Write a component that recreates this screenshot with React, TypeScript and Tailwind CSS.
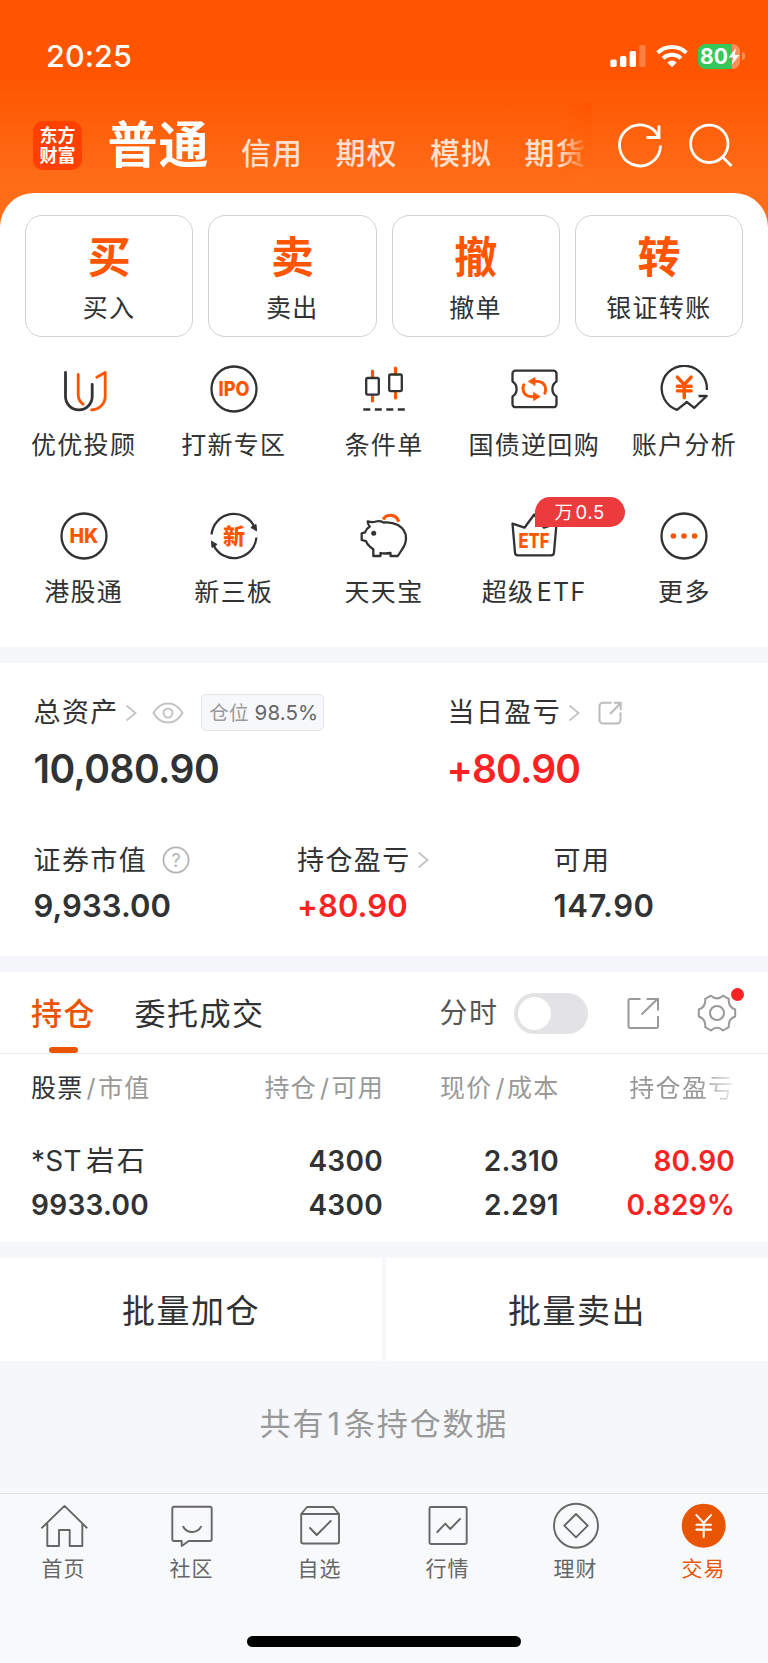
import type { ReactNode } from 'react';
import { JapaneseYen } from 'lucide-react';

const DARK = '#303233';
const ORANGE = '#ff5500';

const accountTabs = ['信用', '期权', '模拟', '期货'];

const quickActions = [
  { mark: '买', label: '买入' },
  { mark: '卖', label: '卖出' },
  { mark: '撤', label: '撤单' },
  { mark: '转', label: '银证转账' },
];

function Icon({ children }: { children: ReactNode }) {
  return (
    <svg className="w-12 h-12 shrink-0" viewBox="0 0 48 48" fill="none" stroke={DARK} strokeWidth={2.3} strokeLinecap="round" strokeLinejoin="round">
      {children}
    </svg>
  );
}

function IconText({ children, y = 31, size = 20, width }: { children: string; y?: number; size?: number; width?: number }) {
  return (
    <text x="24" y={y} fontSize={size} fontWeight={800} textAnchor="middle" fill={ORANGE} stroke="none" textLength={width} lengthAdjust="spacingAndGlyphs">
      {children}
    </text>
  );
}

const services: { label: string; badge?: string; icon: ReactNode }[] = [
  {
    label: '优优投顾',
    icon: (
      <Icon>
        <g strokeWidth={2.8}>
          <path d="M5.5 7.5V31.5a13.3 13.3 0 0 0 26.7 0V19.5" />
          <path stroke={ORANGE} d="M18.2 9.5V29q0 7 5 10.3M36.8 12.3l8.4-4.8V31a13.5 13.5 0 0 1-13.7 13.8" />
        </g>
      </Icon>
    ),
  },
  {
    label: '打新专区',
    icon: (
      <Icon>
        <circle cx="24" cy="24" r="22.5" />
        <IconText width={31}>IPO</IconText>
      </Icon>
    ),
  },
  {
    label: '条件单',
    icon: (
      <Icon>
        <path stroke={ORANGE} strokeWidth={3.2} d="M12.5 6v6M12.5 31v5M35.5 3v6M35.5 27v6" />
        <rect x="6.2" y="13" width="12.6" height="16.6" rx="1.5" />
        <rect x="29.2" y="9.5" width="12.6" height="16.6" rx="1.5" />
        <path strokeLinecap="butt" strokeDasharray="7 4.5" d="M3.3 44.5H44.8" />
      </Icon>
    ),
  },
  {
    label: '国债逆回购',
    icon: (
      <Icon>
        <path d="M5.5 5.6H43.5a3 3 0 0 1 3 3V16.5c-5.5 3.5-5.5 11.5 0 15V39.2a3 3 0 0 1-3 3H5.5a3 3 0 0 1-3-3V31.5c5.5-3.5 5.5-11.5 0-15V8.6a3 3 0 0 1 3-3Z" />
        {[0, 180].map((r) => (
          <g key={r} transform={`rotate(${r} 24.3 24)`} stroke={ORANGE}>
            <path strokeWidth={2.9} d="M25 16.4H28Q35.6 17.5 35.6 24.5Q35.6 26.8 34.8 28.2" />
            <path strokeWidth={0.8} fill={ORANGE} d="M18.6 16.3l6.4-3.9v7.8z" />
          </g>
        ))}
      </Icon>
    ),
  },
  {
    label: '账户分析',
    icon: (
      <Icon>
        <path strokeLinecap="butt" d="M46.8 25A22.6 22.6 0 1 0 17 44.8l9.8-7.8 7.4 5.8 12.5-11.8H38.5" />
        <JapaneseYen x={10.5} y={8.7} width={27.5} height={27.5} color={ORANGE} strokeWidth={3} />
      </Icon>
    ),
  },
  {
    label: '港股通',
    icon: (
      <Icon>
        <circle cx="24" cy="24" r="22.5" />
        <IconText width={29}>HK</IconText>
      </Icon>
    ),
  },
  {
    label: '新三板',
    icon: (
      <Icon>
        {[0, 180].map((r) => (
          <g key={r} transform={`rotate(${r} 24 24)`}>
            <path strokeLinecap="butt" d="M1.6 22.5A22.5 22.5 0 0 1 44.5 15" />
            <path fill={DARK} strokeWidth={1} d="M41.2 15.3l4.8-2.8.5 6z" />
          </g>
        ))}
        <IconText size={22} y={32}>新</IconText>
      </Icon>
    ),
  },
  {
    label: '天天宝',
    icon: (
      <Icon>
        <path d="M7.7 9.3Q12 11 16 9.5Q20 8.5 23.5 10.5Q31 9.5 38 13Q46 18 46 26Q46 32 42 37.5L37.8 44H30.5V41Q25 42 20.5 41V44H13.3V37.3Q7.5 33.5 6 29.2L1.7 28V21.3L5 20.3Q6.5 16.5 9.8 14.5Q7.5 12 7.7 9.3Z" />
        <circle cx="13.7" cy="21.3" r="2.5" fill={DARK} stroke="none" />
        <path stroke={ORANGE} strokeWidth={3.2} strokeLinecap="butt" d="M23.2 7.5C26.5 1.5 36.5 1.5 38.8 9.8" />
      </Icon>
    ),
  },
  {
    label: '超级 ETF',
    badge: '万 0.5',
    icon: (
      <Icon>
        <path d="M2.5 11.7L14.5 15.7L24.2 2.5L34 15.7L46.5 11.7L44 40.5a3 3 0 0 1-3 2.9H8a3 3 0 0 1-3-2.9Z" />
        <IconText y={35.7} width={31}>ETF</IconText>
      </Icon>
    ),
  },
  {
    label: '更多',
    icon: (
      <Icon>
        <circle cx="24" cy="24" r="22.5" />
        <g fill={ORANGE} stroke="none">
          <circle cx="13.4" cy="24" r="2.8" />
          <circle cx="24" cy="24" r="2.8" />
          <circle cx="34.6" cy="24" r="2.8" />
        </g>
      </Icon>
    ),
  },
];

const bottomTabs: { label: string; active?: boolean; icon: ReactNode }[] = [
  { label: '首页', icon: <path d="M2 25.7L24.5 3.9L46.7 25.7M7.3 21.5V44H19V28H29.7V44H42.3V21.5" /> },
  {
    label: '社区',
    icon: <path d="M6 4.7H42a1.7 1.7 0 0 1 1.7 1.7V37.3a1.7 1.7 0 0 1-1.7 1.7H20.7L13.7 44V39H6a1.7 1.7 0 0 1-1.7-1.7V6.4A1.7 1.7 0 0 1 6 4.7ZM15.3 24.7Q18 30 24.2 30T33 24.7" />,
  },
  {
    label: '自选',
    icon: <path d="M5.2 12V39.5a2 2 0 0 0 2 2H41a2 2 0 0 0 2-2V12L37.3 5H11L5.2 12H43M14 26l6.7 7 14-14" />,
  },
  {
    label: '行情',
    icon: (
      <>
        <rect x="5.5" y="5" width="37.2" height="37" rx="1.5" />
        <path d="M13.3 30l8-8.3 5 5.3L36 17" />
      </>
    ),
  },
  {
    label: '理财',
    icon: (
      <>
        <circle cx="24" cy="23.7" r="22" />
        <path d="M24 12L35.7 23.7L24 35.4L12.3 23.7Z" />
      </>
    ),
  },
  {
    label: '交易',
    active: true,
    icon: (
      <>
        <circle cx="23.7" cy="23.7" r="22" fill="#ea5504" stroke="none" />
        <JapaneseYen x={9.2} y={9.5} width={29} height={29} color="#fff" strokeWidth={1.7} />
      </>
    ),
  },
];

function Chevron() {
  return (
    <svg className="w-3 h-[18px] ml-[6.5px]" viewBox="0 0 12 18" fill="none" stroke="#c4c4c4" strokeWidth={1.8}>
      <path d="M1.5 1.5L10.5 9L1.5 16.5" />
    </svg>
  );
}

function StatusBar() {
  return (
    <div className="flex h-28 items-center justify-between pl-[46px] pr-[23px] text-white">
      <span className="text-[30.5px] font-medium leading-none tracking-[0.1px]">20:25</span>
      <div className="flex items-center">
        <svg className="w-9 h-[22px]" viewBox="0 0 36 22" fill="#fff">
          <rect x="0.3" y="14.5" width="6.4" height="7.5" rx="1.8" />
          <rect x="10" y="11" width="6.4" height="11" rx="1.8" />
          <rect x="19.6" y="6" width="6.4" height="16" rx="1.8" />
          <rect x="29.2" y="0" width="6.4" height="22" rx="1.8" opacity="0.25" />
        </svg>
        <svg className="ml-[9.5px] w-8 h-6" viewBox="0 0 32 24" fill="none" stroke="#fff" strokeWidth={4}>
          <path d="M1.7 8.7A20.5 20.5 0 0 1 30.3 8.7" />
          <path d="M7 14.3A13 13 0 0 1 25 14.3" />
          <path d="M16 23.2L11.3 18.4A6.6 6.6 0 0 1 20.7 18.4Z" fill="#fff" stroke="none" />
        </svg>
        <div className="ml-2.5 flex h-[25px] w-[42.5px] items-center overflow-hidden rounded-[7.5px] bg-[linear-gradient(to_right,#34c759_34px,#ff8e58_34px)]">
          <span className="pl-[2.5px] text-[21px] font-bold leading-none">80</span>
          <svg className="w-3 h-[17px]" viewBox="0 0 12 17" fill="#fff">
            <path d="M8 0L0.5 9.5H5.2L3.5 17L11.5 7H6.8Z" />
          </svg>
        </div>
        <span className="ml-0.5 h-2 w-[3px] rounded-r-full bg-[#ff8e58]" />
      </div>
    </div>
  );
}

function NavBar() {
  return (
    <div className="relative flex h-[80.5px] items-center pb-[13.5px] pl-[33px] text-white">
      <div className="h-[49px] w-[49px] shrink-0 rounded-[10px] bg-[#ff4000] pt-[4.5px] text-center text-[18px] font-bold leading-5">
        东方
        <br />
        财富
      </div>
      <span className="-mt-px ml-[25.5px] text-[50px] font-bold leading-none tracking-[1px]">普通</span>
      <div className="ml-[31.5px] mt-[15px] flex gap-[32.5px] text-[30px] font-medium leading-none tracking-[1px] text-[#ffdfcd]">
        {accountTabs.map((tab) => (
          <span key={tab}>{tab}</span>
        ))}
      </div>
      {/* fade at the end of the scrolling tabs */}
      <div className="absolute left-[560px] -top-[9px] h-[89px] w-8 bg-[linear-gradient(to_bottom,#ff5500,#ff6d18_85%)] [mask-image:linear-gradient(to_right,transparent,black_90%)]" />
      <svg className="absolute left-[615.5px] top-[9px] w-12 h-12" viewBox="0 0 48 48" fill="none" stroke="#fff" strokeWidth={2.8}>
        <path d="M44.5 24.5A20.5 20.5 0 1 1 42.5 15.5" />
        <path d="M43 4.500V16.500H30.5" />
      </svg>
      <svg className="absolute left-[687px] top-[9.5px] w-12 h-12" viewBox="0 0 48 48" fill="none" stroke="#fff" strokeWidth={2.8}>
        <circle cx="22.3" cy="21.8" r="18.7" />
        <path d="M35 34.5L44.5 44" />
      </svg>
    </div>
  );
}

function Assets() {
  return (
    <section className="h-[293.5px] bg-white pl-[33.5px] pt-8 text-[27px] leading-none tracking-[1.4px]">
      <div className="flex">
        <div className="w-[414px]">
          <div className="flex h-9 items-center">
            总资产
            <Chevron />
            <svg className="ml-[15px] w-8 h-6" viewBox="0 0 32 24" fill="none" stroke="#c4c4c4" strokeWidth={2}>
              <path d="M1.5 12Q7 2.5 16 2.5T30.5 12Q25 21.5 16 21.5T1.5 12Z" />
              <circle cx="16" cy="12" r="4.5" />
            </svg>
            <div className="ml-[17px] flex h-[37px] w-[123px] items-center rounded-[5px] border border-[#e6e6e9] bg-[#f7f8fb] pl-[7px] pt-0.5 text-[19.5px] tracking-[0.2px] text-[#999]">
              仓位<span className="ml-1.5 text-[20.5px] tracking-[0.1px] text-[#666]">98.5%</span>
            </div>
          </div>
          <div className="mt-[18px] flex h-10 items-center text-[39px] font-semibold tracking-[-0.55px]">10,080.90</div>
        </div>
        <div>
          <div className="flex h-9 items-center">
            当日盈亏
            <Chevron />
            <svg className="ml-[18px] w-6 h-6" viewBox="0 0 24 24" fill="none" stroke="#bbb" strokeWidth={2}>
              <path d="M13.5 1.8H5A3.5 3.5 0 0 0 1.5 5.3V19A3.5 3.5 0 0 0 5 22.5H19A3.5 3.5 0 0 0 22.5 19V11.5" />
              <path d="M12 13L22.3 2.5M16 1.8H22.7V9" />
            </svg>
          </div>
          <div className="-ml-px mt-[18px] flex h-10 items-center text-[39px] font-semibold tracking-[-0.8px] text-[#fa2323]">+80.90</div>
        </div>
      </div>
      <div className="mt-[55.5px] flex">
        <div className="w-[263.5px]">
          <div className="flex h-8 items-center">
            证券市值
            <svg className="ml-[15px] w-7 h-7" viewBox="0 0 28 28" fill="none" stroke="#b4b4b4" strokeWidth={1.8}>
              <circle cx="14" cy="14" r="12.6" />
              <text x="14" y="20.5" fontSize="18" textAnchor="middle" fill="#b4b4b4" stroke="none" letterSpacing="0">?</text>
            </svg>
          </div>
          <div className="mt-[13.5px] flex h-8 items-center text-[31px] font-semibold tracking-[0.05px]">9,933.00</div>
        </div>
        <div className="w-[256.5px]">
          <div className="flex h-8 items-center">
            持仓盈亏
            <Chevron />
          </div>
          <div className="mt-[13.5px] flex h-8 items-center text-[31px] font-semibold tracking-[0.1px] text-[#fa2323]">+80.90</div>
        </div>
        <div>
          <div className="flex h-8 items-center">可用</div>
          <div className="mt-[13.5px] flex h-8 items-center text-[31px] font-semibold tracking-[0.6px]">147.90</div>
        </div>
      </div>
    </section>
  );
}

function Holdings() {
  return (
    <section className="h-[269.5px] bg-white leading-none">
      <div className="flex h-[81.5px] items-center border-b border-[#ededef] pl-[31px] pt-0.5 text-[31px] tracking-[1.5px]">
        <div className="relative flex h-full items-center font-medium text-[#ea5504]">
          持仓
          <span className="absolute bottom-0 left-[18px] h-[5.5px] w-[29px] rounded-[3px] bg-[#ea5504]" />
        </div>
        <span className="ml-[38.5px]">委托成交</span>
        <span className="ml-auto text-[28px] text-[#555]">分时</span>
        <div className="ml-[15.5px] flex h-[41px] w-[74px] items-center rounded-full bg-[#e3e3e5] px-1">
          <span className="h-[33px] w-[33px] rounded-full bg-white" />
        </div>
        <svg className="ml-[39px] w-8 h-8" viewBox="0 0 32 32" fill="none" stroke="#999" strokeWidth={2}>
          <path d="M13.5 2H3A1.5 1.5 0 0 0 1.5 3.5V29.5A1.5 1.5 0 0 0 3 31H29.500A1.5 1.5 0 0 0 31 29.500V19" />
          <path d="M14.5 17.5L30.5 2M19.5 2H31V13.5" />
        </svg>
        <div className="relative ml-[33.5px] mr-[27.5px] h-12 w-12">
          <svg className="w-12 h-12" viewBox="0 0 48 48" fill="none" stroke="#999" strokeWidth={2} strokeLinejoin="round">
            <path d="M18 6.7Q24 12 30 6.7L35.8 9.8Q35 18 42.2 20.5V27.5Q35 30 35.8 38.2L30 41.5Q24 36 18 41.5L12.2 38.2Q13 30 5.8 27.5V20.5Q13 18 12.2 9.8Z" />
            <circle cx="24" cy="24" r="7" />
          </svg>
          <span className="absolute right-[-3px] -top-px h-[13px] w-[13px] rounded-full bg-[#fa2323]" />
        </div>
      </div>
      <div className="grid h-[69px] grid-cols-[150px_203px_175.5px_175px] items-center pl-[31px] text-[25px] tracking-[1.3px] text-[#999]">
        <div className="whitespace-nowrap">
          <span className="text-[#303233]">股票</span>
          <span className="ml-[3px] mr-px">/</span>市值
        </div>
        <div className="text-right">持仓<span className="ml-[3px] mr-px">/</span>可用</div>
        <div className="text-right">现价<span className="ml-[3px] mr-px">/</span>成本</div>
        <div className="text-right [mask-image:linear-gradient(to_right,black_80%,transparent_103%)]">持仓盈亏</div>
      </div>
      <div className="mt-[16.5px] grid h-11 grid-cols-[150px_202px_176px_176px] items-center pl-[31px] text-right text-[28px] font-semibold tracking-[0.3px]">
        <div className="text-left font-normal">*ST <span className="-ml-1 tracking-[2.5px]">岩石</span></div>
        <div>4300</div>
        <div>2.310</div>
        <div className="tracking-[0.2px] text-[#fa2323]">80.90</div>
      </div>
      <div className="grid h-11 grid-cols-[150px_202px_176px_176px] items-center pl-[31px] text-right text-[28px] font-semibold tracking-[0.3px]">
        <div className="text-left">9933.00</div>
        <div>4300</div>
        <div>2.291</div>
        <div className="tracking-[0.2px] text-[#fa2323]">0.829%</div>
      </div>
    </section>
  );
}

export default function App() {
  return (
    <div className="h-[1663px] w-[768px] overflow-hidden bg-[#f5f7fa] font-['Inter','Noto_Sans_CJK_SC',sans-serif] text-[#303233]">
      <div className="bg-[linear-gradient(to_bottom,#ff5500_75px,#ff6d18_185px)]">
        <StatusBar />
        <NavBar />
        <section className="h-[454px] rounded-t-[34px] bg-white pt-[22px]">
          <div className="grid grid-cols-4 gap-[15px] pl-[25px] pr-[25px]">
            {quickActions.map(({ mark, label }) => (
              <div key={label} className="flex h-[122px] flex-col items-center rounded-[17px] border border-[#d2d2d2] pt-5 leading-none">
                <span className="text-[43px] font-bold text-[#ff5500]">{mark}</span>
                <span className="mt-[17px] text-[25px] tracking-[1.3px]">{label}</span>
              </div>
            ))}
          </div>
          <div className="mt-7 grid grid-cols-5 gap-y-[53.5px] px-[8.5px]">
            {services.map(({ label, badge, icon }) => (
              <div key={label} className="flex flex-col items-center">
                <div className="relative">
                  {icon}
                  {badge && (
                    <span className="absolute -top-[15px] left-[24.5px] flex h-[30.5px] w-[90px] items-center justify-center rounded-full rounded-bl-none bg-[#eb3b3d] text-[18.5px] leading-none tracking-[0.6px] text-white [word-spacing:-4px]">
                      {badge}
                    </span>
                  )}
                </div>
                <span className="mt-[19.5px] h-[26px] whitespace-nowrap text-[25px] leading-[26px] tracking-[1.3px] [word-spacing:-6px]">{label}</span>
              </div>
            ))}
          </div>
        </section>
      </div>

      <div className="h-4" />
      <Assets />
      <div className="h-4" />
      <Holdings />

      <div className="mt-4 flex h-[103.5px] gap-1 text-[33px] leading-none tracking-[1.5px]">
        <button className="w-[382px] bg-white pt-[5px]">批量加仓</button>
        <button className="w-[382px] bg-white pt-[5px]">批量卖出</button>
      </div>
      <div className="flex h-[132px] items-center justify-center pb-2 text-[31px] leading-none tracking-[1.9px] text-[#999]">
        共有<span className="mx-0.5">1</span>条持仓数据
      </div>

      <nav className="h-[170px] border-t border-[#e0e1e4] bg-[#f8f9fb] pt-2">
        <div className="grid grid-cols-6">
          {bottomTabs.map(({ label, active, icon }) => (
            <div key={label} className={active ? 'flex flex-col items-center text-[#ea5504]' : 'flex flex-col items-center text-[#666]'}>
              <svg className="w-12 h-12" viewBox="0 0 48 48" fill="none" stroke="currentColor" strokeWidth={1.9} strokeLinecap="round" strokeLinejoin="round">
                {icon}
              </svg>
              <span className="mt-1.5 pr-px text-[21px] leading-[26px] tracking-[1px]">{label}</span>
            </div>
          ))}
        </div>
        <div className="mx-auto mt-[54px] h-[10.5px] w-[274px] rounded-full bg-black" />
      </nav>
    </div>
  );
}
